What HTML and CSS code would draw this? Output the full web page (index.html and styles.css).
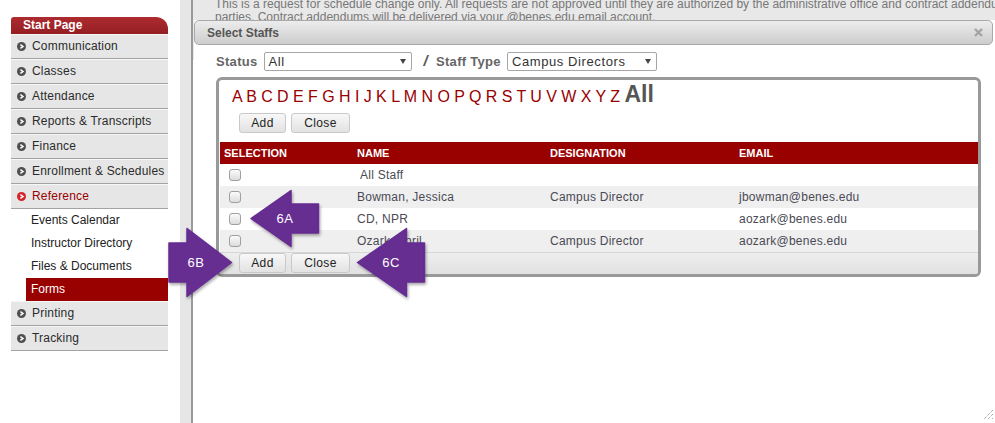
FILE: index.html
```html
<!DOCTYPE html>
<html lang="en">

<head>
  <meta charset="UTF-8" />
  <title>Select Staffs</title>
  <link rel="stylesheet" href="styles.css">
</head>

<body>
  <svg class="defs" width="0" height="0">
    <symbol id="bullet" viewBox="0 0 9 9">
      <circle cx="4.5" cy="4.5" r="4.5" />
      <path d="M3.4 2.6 L6 4.5 L3.4 6.4" fill="none" stroke="#fff" stroke-width="1.5" />
    </symbol>
  </svg>

  <div class="page">
    <!-- left menu -->
    <div class="sidebar">
      <div class="menu-head">Start Page</div>
      <ul class="menu">
        <li class="item"><svg class="dot"><use href="#bullet" /></svg>Communication</li>
        <li class="item"><svg class="dot"><use href="#bullet" /></svg>Classes</li>
        <li class="item"><svg class="dot"><use href="#bullet" /></svg>Attendance</li>
        <li class="item"><svg class="dot"><use href="#bullet" /></svg>Reports &amp; Transcripts</li>
        <li class="item"><svg class="dot"><use href="#bullet" /></svg>Finance</li>
        <li class="item"><svg class="dot"><use href="#bullet" /></svg>Enrollment &amp; Schedules</li>
        <li class="item active"><svg class="dot"><use href="#bullet" /></svg>Reference</li>
        <li class="sub">
          <ul>
            <li>Events Calendar</li>
            <li>Instructor Directory</li>
            <li>Files &amp; Documents</li>
            <li class="current">Forms</li>
          </ul>
        </li>
        <li class="item"><svg class="dot"><use href="#bullet" /></svg>Printing</li>
        <li class="item"><svg class="dot"><use href="#bullet" /></svg>Tracking</li>
      </ul>
    </div>

    <div class="gutter"></div>

    <div class="main">
      <div class="notice">
        <p>This is a request for schedule change only. All requests are not approved until they are authorized by the administrative office and contract addendums are signed by both<br>parties. Contract addendums will be delivered via your @benes.edu email account.</p>
      </div>

      <!-- modal -->
      <div class="dialog">
        <div class="dialog-title">
          <span>Select Staffs</span>
          <svg class="x" width="9" height="9" viewBox="0 0 9 9">
            <path d="M1 1 L8 8 M8 1 L1 8" stroke="#a3a3a3" stroke-width="2.4" />
          </svg>
        </div>

        <div class="toolbar">
          <span>Status</span>
          <span class="select status-select"><span>All</span><i class="caret"></i></span>
          <span class="slash">/</span>
          <span>Staff Type</span>
          <span class="select type-select"><span>Campus Directors</span><i class="caret"></i></span>
        </div>

        <div class="panel">
          <div class="alpha">A B C D E F G H I J K L M N O P Q R S T U V W X Y Z <span class="all">All</span></div>
          <div class="buttons">
            <button class="btn btn-add">Add</button>
            <button class="btn btn-close">Close</button>
          </div>

          <div class="grid">
            <table class="staff">
              <colgroup>
                <col style="width:133px">
                <col style="width:193px">
                <col style="width:189px">
                <col>
              </colgroup>
              <thead>
                <tr>
                  <th>SELECTION</th>
                  <th>NAME</th>
                  <th>DESIGNATION</th>
                  <th>EMAIL</th>
                </tr>
              </thead>
              <tbody>
                <tr>
                  <td class="check"><span class="box"></span></td>
                  <td class="first">All Staff</td>
                  <td></td>
                  <td></td>
                </tr>
                <tr>
                  <td class="check"><span class="box"></span></td>
                  <td>Bowman, Jessica</td>
                  <td>Campus Director</td>
                  <td>jbowman@benes.edu</td>
                </tr>
                <tr>
                  <td class="check"><span class="box"></span></td>
                  <td>CD, NPR</td>
                  <td></td>
                  <td>aozark@benes.edu</td>
                </tr>
                <tr>
                  <td class="check"><span class="box"></span></td>
                  <td>Ozark, April</td>
                  <td>Campus Director</td>
                  <td>aozark@benes.edu</td>
                </tr>
              </tbody>
            </table>
            <div class="grid-foot">
              <button class="btn btn-add">Add</button>
              <button class="btn btn-close">Close</button>
            </div>
          </div>
        </div>

        <svg class="grip" width="12" height="12" viewBox="0 0 12 12">
          <path d="M11 2 L2 11 M11 6 L6 11 M11 10 L10 11" stroke="#8a8a8a" stroke-width="1" stroke-dasharray="1 1" />
        </svg>
      </div>
    </div>
  </div>

  <!-- purple callout arrows drawn over the page -->
  <svg class="callouts" width="995" height="423" viewBox="0 0 995 423">
    <defs>
      <filter id="shade" x="-20%" y="-20%" width="140%" height="140%">
        <feDropShadow dx="1" dy="2" stdDeviation="1.4" flood-color="#000" flood-opacity="0.35" />
      </filter>
    </defs>
    <g class="arrow" filter="url(#shade)">
      <path d="M251 218.5 L291 190.5 L291 204 L318.5 204 L318.5 233 L291 233 L291 246.5 Z" />
      <path d="M231.5 262.5 L187 228.5 L187 243 L169 243 L169 282 L187 282 L187 296.5 Z" />
      <path d="M357.5 262.5 L406.5 228.5 L406.5 243 L424.5 243 L424.5 282 L406.5 282 L406.5 296.5 Z" />
    </g>
    <g class="tag">
      <text x="285" y="223">6A</text>
      <text x="196" y="267">6B</text>
      <text x="391" y="267">6C</text>
    </g>
  </svg>
</body>

</html>
```

FILE: styles.css
```css
* {
  margin: 0;
  padding: 0;
  box-sizing: border-box;
}

body {
  font-family: "Liberation Sans", Arial, sans-serif;
  font-size: 12px;
  color: #333;
  background: #fff;
  overflow: hidden;
}

.defs {
  position: absolute;
}

.page {
  display: flex;
  height: 423px;
}

/* left menu */
.sidebar {
  flex: none;
  width: 157px;
  margin-left: 11px;
  padding-top: 17px;
}

.menu-head {
  height: 17px;
  line-height: 17px;
  padding-left: 12px;
  background: linear-gradient(#ad2b2f, #931f23);
  color: #fff;
  font-weight: bold;
  border-radius: 3px 12px 0 0;
}

.menu {
  list-style: none;
}

.item {
  display: flex;
  align-items: center;
  height: 25px;
  padding-left: 6px;
  background: #e6e6e6;
  border-bottom: 1px solid #a3a3a3;
  box-shadow: inset 0 1px #f7f7f7;
  letter-spacing: .2px;
  color: #2b2b2b;
}

.item .dot {
  width: 9px;
  height: 9px;
  margin-right: 6px;
  fill: #505050;
}

.item.active {
  color: #990000;
}

.item.active .dot {
  fill: #d2262c;
}

.sub ul {
  list-style: none;
}

.sub li {
  height: 23px;
  line-height: 23px;
  margin-left: 15px;
  padding-left: 5px;
  color: #222;
}

.sub li.current {
  background: #990000;
  color: #fff;
}

.gutter {
  flex: none;
  width: 13px;
  margin-left: 12px;
  background: #e6e6e6;
  border-right: 2px solid #9a9a9a;
}

/* content */
.main {
  flex: 1;
  position: relative;
  overflow: hidden;
}

.notice {
  height: 60px;
  padding: 1px 0 0 22px;
  background: #e8e8e8;
  color: #777;
}

.notice p {
  margin-top: -3px;
  line-height: 13px;
  white-space: nowrap;
}

.dialog {
  position: absolute;
  top: 20px;
  left: 1px;
  right: 0;
  bottom: 0;
  background: #fff;
}

.dialog-title {
  display: flex;
  align-items: center;
  justify-content: space-between;
  height: 25px;
  margin-right: 2px;
  padding: 0 9px 0 12px;
  border: 1px solid #a9a9a9;
  border-radius: 5px;
  background: linear-gradient(#ececec, #cdcdcd);
  color: #555;
  font-weight: bold;
}

.toolbar {
  display: flex;
  align-items: center;
  height: 19px;
  margin: 7px 0 0 22px;
  font-size: 13px;
  font-weight: bold;
  color: #666;
  letter-spacing: .3px;
}

.select {
  display: flex;
  align-items: center;
  justify-content: space-between;
  height: 19px;
  padding: 0 5px 0 4px;
  border: 1px solid #a6a6a6;
  border-radius: 2px;
  background: #fff;
  color: #333;
  font-weight: normal;
  letter-spacing: .6px;
}

.status-select {
  width: 148px;
  margin-left: 6px;
}

.type-select {
  width: 150px;
  margin-left: 6px;
}

.caret {
  border-left: 3px solid transparent;
  border-right: 3px solid transparent;
  border-top: 5px solid #444;
}

.slash {
  margin: -3px 8px 0 12px;
  font-style: italic;
  font-size: 15px;
  color: #555;
}

.panel {
  margin: 6px 14px 0 22px;
  border: 3px solid #999;
  border-radius: 6px;
  overflow: hidden;
}

.alpha {
  height: 30px;
  padding: 4px 0 0 13px;
  line-height: 26px;
  font-size: 16px;
  letter-spacing: -.04px;
  color: #990000;
}

.alpha .all {
  font-size: 23px;
  font-weight: bold;
  line-height: 20px;
  letter-spacing: 0;
  color: #555;
}

.buttons {
  display: flex;
  gap: 5px;
  margin: 3px 0 9px;
  padding-left: 20px;
}

.btn {
  height: 20px;
  border: 1px solid #c9c9c9;
  border-radius: 3px;
  background: linear-gradient(#f8f8f8, #e2e2e2);
  font: 12px "Liberation Sans", Arial, sans-serif;
  letter-spacing: .4px;
  color: #222;
}

.btn-add {
  width: 47px;
}

.btn-close {
  width: 59px;
}

.grid {
  margin-left: 1px;
}

.staff {
  width: 100%;
  border-collapse: collapse;
  table-layout: fixed;
}

.staff th {
  height: 22px;
  padding-left: 4px;
  background: #990000;
  color: #fff;
  font-size: 11px;
  text-align: left;
}

.staff td {
  height: 22px;
  padding-left: 4px;
  color: #4a4a55;
  letter-spacing: .25px;
}

.staff td.check {
  padding-left: 9px;
}

.staff td.first {
  padding-left: 7px;
}

.staff tbody tr:nth-child(even) {
  background: #efefef;
}

.box {
  display: block;
  width: 12px;
  height: 12px;
  border: 1px solid #a0a0a0;
  border-radius: 3px;
  background: linear-gradient(#fbfbfb, #dcdcdc);
}

.grid-foot {
  display: flex;
  gap: 5px;
  height: 22px;
  padding-left: 19px;
  border-top: 1px solid #d6d6d6;
  background: linear-gradient(#eeeeee, #e1e1e1);
}

.grip {
  position: absolute;
  right: 1px;
  bottom: 3px;
}

/* callouts */
.callouts {
  position: absolute;
  left: 0;
  top: 0;
  pointer-events: none;
}

.arrow path {
  fill: #662d91;
  stroke: #662d91;
  stroke-width: 1.5;
  stroke-linejoin: round;
}

.tag text {
  fill: #fff;
  font-family: "Liberation Sans", Arial, sans-serif;
  font-size: 13px;
  letter-spacing: .5px;
  text-anchor: middle;
}
```
